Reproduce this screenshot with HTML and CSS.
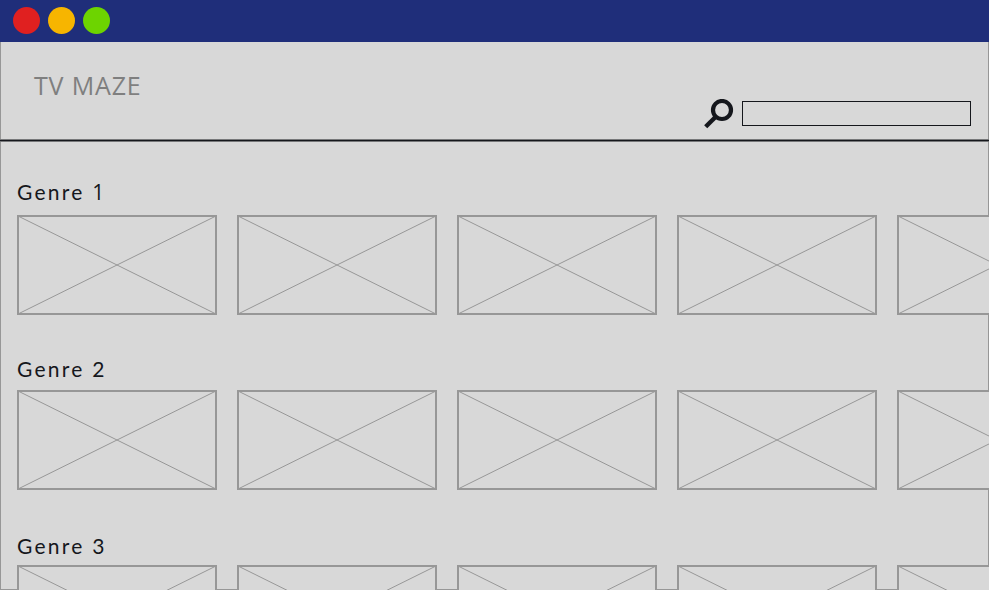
FILE: index.html
```html
<!DOCTYPE html>
<html lang="en">
<head>
<meta charset="utf-8">
<title>TV MAZE</title>
<link rel="stylesheet" href="styles.css">
</head>
<body>
<div class="titlebar">
  <span class="dot red"></span><span class="dot yellow"></span><span class="dot green"></span>
</div>
<div class="window">
  <header class="header">
    <h1 class="brand">TV MAZE</h1>
    <div class="search">
      <svg class="search-icon" width="30" height="30" viewBox="0 0 30 30"><circle cx="18" cy="11" r="9" fill="none" stroke="#15171c" stroke-width="4.2"/><path d="M12 17.5L1.7 27.8" stroke="#15171c" stroke-width="4.4"/></svg>
      <input class="search-box" type="text" aria-label="Search">
    </div>
  </header>
  <main>
    <section class="genre">
      <h2 class="genre-title">Genre <span class="one">1</span></h2>
      <div class="row">
        <svg class="card" viewBox="0 0 200 100"><path d="M1 1L199 99M199 1L1 99"/><rect x="1" y="1" width="198" height="98"/></svg>
        <svg class="card" viewBox="0 0 200 100"><path d="M1 1L199 99M199 1L1 99"/><rect x="1" y="1" width="198" height="98"/></svg>
        <svg class="card" viewBox="0 0 200 100"><path d="M1 1L199 99M199 1L1 99"/><rect x="1" y="1" width="198" height="98"/></svg>
        <svg class="card" viewBox="0 0 200 100"><path d="M1 1L199 99M199 1L1 99"/><rect x="1" y="1" width="198" height="98"/></svg>
        <svg class="card" viewBox="0 0 200 100"><path d="M1 1L199 99M199 1L1 99"/><rect x="1" y="1" width="198" height="98"/></svg>
      </div>
    </section>
    <section class="genre">
      <h2 class="genre-title second">Genre 2</h2>
      <div class="row">
        <svg class="card" viewBox="0 0 200 100"><path d="M1 1L199 99M199 1L1 99"/><rect x="1" y="1" width="198" height="98"/></svg>
        <svg class="card" viewBox="0 0 200 100"><path d="M1 1L199 99M199 1L1 99"/><rect x="1" y="1" width="198" height="98"/></svg>
        <svg class="card" viewBox="0 0 200 100"><path d="M1 1L199 99M199 1L1 99"/><rect x="1" y="1" width="198" height="98"/></svg>
        <svg class="card" viewBox="0 0 200 100"><path d="M1 1L199 99M199 1L1 99"/><rect x="1" y="1" width="198" height="98"/></svg>
        <svg class="card" viewBox="0 0 200 100"><path d="M1 1L199 99M199 1L1 99"/><rect x="1" y="1" width="198" height="98"/></svg>
      </div>
    </section>
    <section class="genre">
      <h2 class="genre-title third">Genre 3</h2>
      <div class="row clipped">
        <svg class="card" viewBox="0 0 200 100"><path d="M1 1L199 99M199 1L1 99"/><rect x="1" y="1" width="198" height="98"/></svg>
        <svg class="card" viewBox="0 0 200 100"><path d="M1 1L199 99M199 1L1 99"/><rect x="1" y="1" width="198" height="98"/></svg>
        <svg class="card" viewBox="0 0 200 100"><path d="M1 1L199 99M199 1L1 99"/><rect x="1" y="1" width="198" height="98"/></svg>
        <svg class="card" viewBox="0 0 200 100"><path d="M1 1L199 99M199 1L1 99"/><rect x="1" y="1" width="198" height="98"/></svg>
        <svg class="card" viewBox="0 0 200 100"><path d="M1 1L199 99M199 1L1 99"/><rect x="1" y="1" width="198" height="98"/></svg>
      </div>
    </section>
  </main>
</div>
</body>
</html>
```

FILE: styles.css
```css
* { box-sizing: border-box; }
html, body { margin: 0; height: 590px; overflow: hidden; }
body { background: #d8d8d8; color: #15171c; }

.titlebar {
  height: 42px;
  padding: 7px 13px 0;
  display: flex;
  gap: 8px;
  background: #1f2e7a;
}
.dot { width: 27px; height: 27px; border-radius: 50%; }
.red { background: #e02020; }
.yellow { background: #f7b500; }
.green { background: #6dd400; }

/* The frame is a shadow so that the cards cover it at the edges. */
.window {
  height: 548px;
  overflow: hidden;
  box-shadow: inset 1px 0 #979797, inset -1px 0 #979797, inset 0 -1px #979797;
}
.header {
  height: 100px;
  display: flex;
  justify-content: space-between;
  padding: 0 18px 0 34px;
  border-bottom: 1px solid #77787a;
  box-shadow: inset 0 -1px #15171c, inset 0 -2px #77787a;
}
.brand {
  margin: 25px 0 0;
  font: 400 25px/36px "Open Sans", sans-serif;
  letter-spacing: 0.85px;
  color: #7f7f7f;
  white-space: nowrap;
}
.search { display: flex; padding-top: 57px; }
.search-icon { display: block; margin-right: 8px; }
.search-box {
  width: 229px;
  height: 25px;
  margin: 2px 0 0;
  padding: 0 6px;
  border: 1px solid #15171c;
  border-radius: 0;
  background: transparent;
  outline: none;
}

.genre { padding-left: 17px; }
.genre-title {
  height: 73px;
  margin: 0;
  padding-top: 35px;
  font: 400 21px/30px Lato, sans-serif;
  letter-spacing: 2.25px;
  white-space: nowrap;
}
.one { font-family: "Open Sans", sans-serif; line-height: 1; }
.genre-title.second { height: 75px; padding-top: 39px; }
.genre-title.third { height: 75px; padding-top: 41px; }
.row { display: flex; gap: 20px; overflow: hidden; }
.row.clipped { height: 25px; }
.card {
  flex: none;
  width: 200px;
  height: 100px;
  background: #d8d8d8;
  fill: none;
  stroke: #979797;
}
.card rect { stroke-width: 2; }
.card path { stroke-width: 1; }
```
